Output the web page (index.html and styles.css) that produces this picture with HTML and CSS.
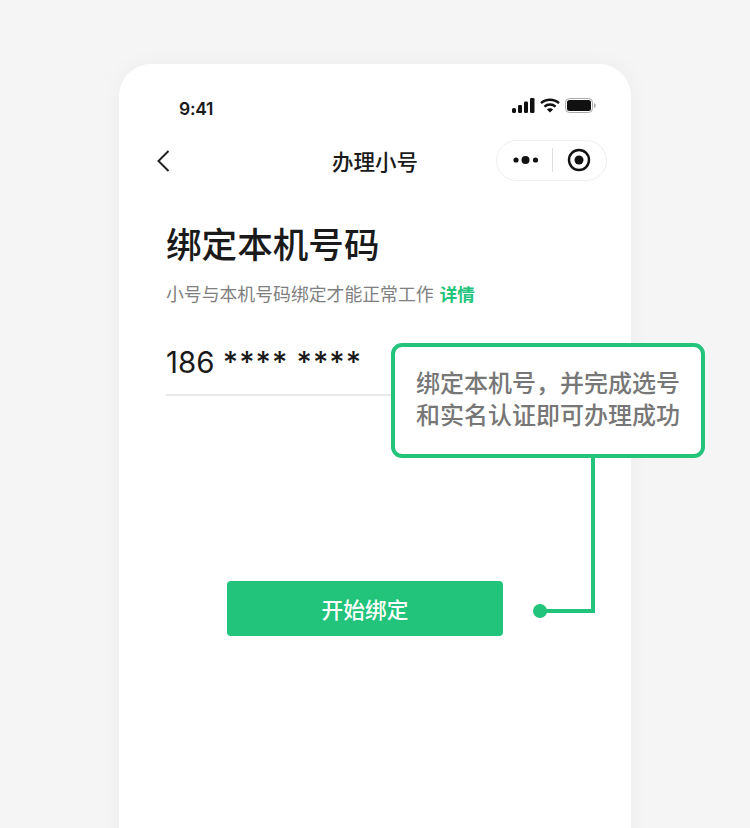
FILE: index.html
```html
<!DOCTYPE html>
<html lang="zh-CN">
<head>
  <meta charset="UTF-8" />
  <title>办理小号</title>
  <link rel="stylesheet" href="styles.css">
</head>
<body>
  <div class="phone">
    <div class="status-bar">
      <span class="time">9:41</span>
      <div class="status-icons">
        <svg width="23" height="15" viewBox="0 0 23 15" fill="#111">
          <rect x="0" y="10" width="4" height="5" rx="1.5"/>
          <rect x="6" y="7" width="4" height="8" rx="1.2"/>
          <rect x="12" y="3.5" width="4" height="11.5" rx="1.2"/>
          <rect x="18" y="0" width="4.500" height="15" rx="1.2"/>
        </svg>
        <svg width="20" height="15" viewBox="0 0 20 15" fill="none" stroke="#111" stroke-width="2.4">
          <path d="M1 5.2C6 .6 14 .6 19 5.2"/>
          <path d="M4.4 8.6C7.6 5.8 12.4 5.8 15.6 8.6"/>
          <path d="M10 14.6L6.9 11.4C8.7 10 11.3 10 13.1 11.4Z" fill="#111" stroke="none"/>
        </svg>
        <svg width="32" height="15" viewBox="0 0 32 15">
          <rect x="0.5" y="0.5" width="27" height="14" rx="4" fill="none" stroke="#aaa"/>
          <rect x="2" y="2" width="24" height="11" rx="2.5" fill="#111"/>
          <path d="M29 5v5c1.2-.4 1.8-1.400 1.800-2.500S30.200 5.400 29 5z" fill="#aaa"/>
        </svg>
      </div>
    </div>

    <div class="nav-bar">
      <svg class="back" width="14" height="24" viewBox="0 0 14 24" fill="none" stroke="#222" stroke-width="2">
        <path d="M12.500 3L2.500 13l10 10"/>
      </svg>
      <span class="nav-title">办理小号</span>
      <div class="capsule">
        <svg width="26" height="10" viewBox="0 0 26 10" fill="#111">
          <circle cx="3" cy="5" r="2.600"/>
          <circle cx="12.500" cy="5" r="4"/>
          <circle cx="22.500" cy="5" r="2.600"/>
        </svg>
        <span class="capsule-line"></span>
        <svg width="24" height="24" viewBox="0 0 24 24">
          <circle cx="12" cy="12" r="10" fill="none" stroke="#111" stroke-width="2.400"/>
          <circle cx="12" cy="12" r="4.500" fill="#111"/>
        </svg>
      </div>
    </div>

    <div class="content">
      <h1>绑定本机号码</h1>
      <p class="desc">小号与本机号码绑定才能正常工作<a class="link">详情</a></p>
      <div class="number">186 <span class="stars">****</span> <span class="stars">****</span></div>
      <button class="bind-btn">开始绑定</button>
    </div>
  </div>

  <div class="callout">绑定本机号，并完成选号<br>和实名认证即可办理成功</div>
  <div class="connector"><span class="dot"></span></div>
</body>
</html>
```

FILE: styles.css
```css
html, body { height: 828px; }
body { margin: 0; background: #f5f5f5; color: #1a1a1a; font-family: "Inter", "Noto Sans CJK SC", sans-serif; overflow: hidden; position: relative; }
.phone { width: 512px; height: 800px; margin: 64px 0 0 119px; background: #fff; border-radius: 32px; box-shadow: 0 0 24px rgba(0, 0, 0, 0.04); }
.status-bar { display: flex; justify-content: space-between; align-items: center; height: 24px; padding: 32px 34px 0 60px; }
.time { font-size: 17.500px; font-weight: 600; letter-spacing: -0.300px; }
.status-icons { display: flex; align-items: center; gap: 5px; padding-bottom: 5px; }
.nav-bar { display: flex; align-items: center; justify-content: space-between; height: 42px; margin-top: 19px; padding: 0 24px 0 37px; position: relative; }
.nav-title { position: absolute; left: 0; right: 0; text-align: center; font-size: 21.500px; font-weight: 500; }
.capsule { display: flex; align-items: center; justify-content: space-between; box-sizing: border-box; width: 111px; height: 41px; padding: 0 15px 0 16px; border: 1px solid #eee; border-radius: 21px; background: #fff; position: relative; }
.capsule-line { width: 1px; height: 24px; margin-left: -1px; background: #ddd; }
.content { padding: 40px 47px 0; display: flex; flex-direction: column; }
h1 { margin: 0; font-size: 35.600px; line-height: 50px; font-weight: 500; }
.desc { margin: 10px 0 0; font-size: 17.850px; line-height: 28px; color: #808080; white-space: nowrap; display: flex; align-items: center; }
.link { margin-left: 6px; font-size: 17.500px; font-weight: 700; color: #22c37a; }
.number { width: 400px; box-sizing: border-box; margin-top: 34px; padding-bottom: 13px; font-size: 29.500px; line-height: 38px; border-bottom: 2px solid #e8e8e8; }
.stars { letter-spacing: 1px; font-weight: 500; }
.bind-btn { align-self: flex-start; width: 276px; height: 55px; margin: 185px 0 0 61px; border: 0; border-radius: 4px; background: #22c37a; color: #fff; font-family: inherit; font-size: 21.700px; font-weight: 500; }
.callout { position: absolute; left: 391px; top: 343px; width: 314px; height: 115px; box-sizing: border-box; padding: 21px 0 0 21px; border: 4px solid #22c37a; border-radius: 11px; background: #fff; color: #777; font-size: 24px; line-height: 32px; font-weight: 500; white-space: nowrap; }
.connector { position: absolute; left: 540px; top: 458px; width: 51px; height: 151px; border-right: 4px solid #22c37a; border-bottom: 4px solid #22c37a; }
.dot { position: absolute; left: -7px; bottom: -9px; width: 14px; height: 14px; border-radius: 50%; background: #22c37a; }
```
